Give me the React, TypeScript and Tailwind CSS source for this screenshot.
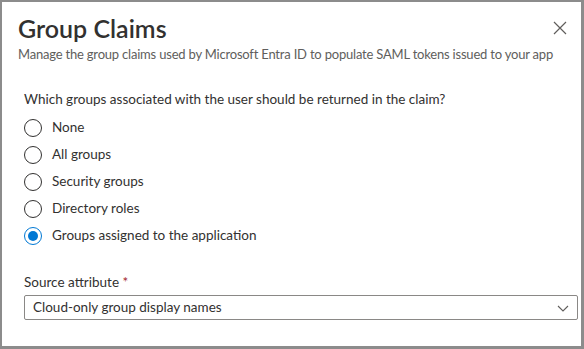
import React from "react";

const options = [
  "None",
  "All groups",
  "Security groups",
  "Directory roles",
  "Groups assigned to the application",
];

const Radio = ({ checked, label }: { checked: boolean; label: string }) => {
  return (
    <label className="flex h-[27px] items-center gap-[10px]">
      {checked ? (
        <span className="flex h-[18px] w-[18px] items-center justify-center rounded-full border border-[#0078d4] bg-white">
          <span className="h-[10px] w-[10px] rounded-full bg-[#0078d4]" />
        </span>
      ) : (
        <span className="h-[18px] w-[18px] rounded-full border border-[#323130] bg-white" />
      )}
      <span className="text-[13.5px] text-[#323130]">{label}</span>
    </label>
  );
};

export default function App() {
  const selected = "Groups assigned to the application";
  return (
    <div
      className="h-[349px] w-[584px] overflow-hidden border-t-2 border-l-2 border-r-[3px] border-b-[3px] border-[#8c8c8c] bg-white"
      style={{ fontFamily: "Lato, 'Open Sans', sans-serif" }}
    >
      <div className="pl-4 pr-[14px] pt-[9px]">
        <div className="flex items-start justify-between">
          <h1 className="text-[25px] font-semibold leading-[34px] text-[#323130]">
            Group Claims
          </h1>
          <button className="mt-[10px] text-[#605e5c]">
            <svg width="14" height="14" viewBox="0 0 14 14" fill="none" stroke="currentColor" strokeWidth="1.2">
              <path d="M1 1L13 13M13 1L1 13" />
            </svg>
          </button>
        </div>
        <p className="whitespace-nowrap text-[13px] leading-[18px] tracking-[-0.2px] text-[#605e5c]">
          Manage the group claims used by Microsoft Entra ID to populate SAML tokens issued to your app
        </p>
      </div>

      <div className="pl-[22px] pr-[3px] pt-[27px]">
        <p className="text-[13.5px] leading-[18px] text-[#323130]">
          Which groups associated with the user should be returned in the claim?
        </p>
        <div className="mt-[6px] flex flex-col">
          {options.map((o) => (
            <Radio key={o} label={o} checked={o === selected} />
          ))}
        </div>

        <div className="mt-[24px]">
          <p className="text-[13.5px] leading-[18px] text-[#323130]">
            Source attribute <span className="text-[#a4262c]">*</span>
          </p>
          <div className="mt-[4px] flex h-[25px] items-center justify-between rounded-[2px] border border-[#8a8886] pl-[8px] pr-[8px]">
            <span className="text-[13.5px] text-[#323130]">Cloud-only group display names</span>
            <svg width="12" height="12" viewBox="0 0 12 12" fill="none" stroke="#605e5c" strokeWidth="1.1">
              <path d="M1 4L6 9L11 4" />
            </svg>
          </div>
        </div>
      </div>
    </div>
  );
}
